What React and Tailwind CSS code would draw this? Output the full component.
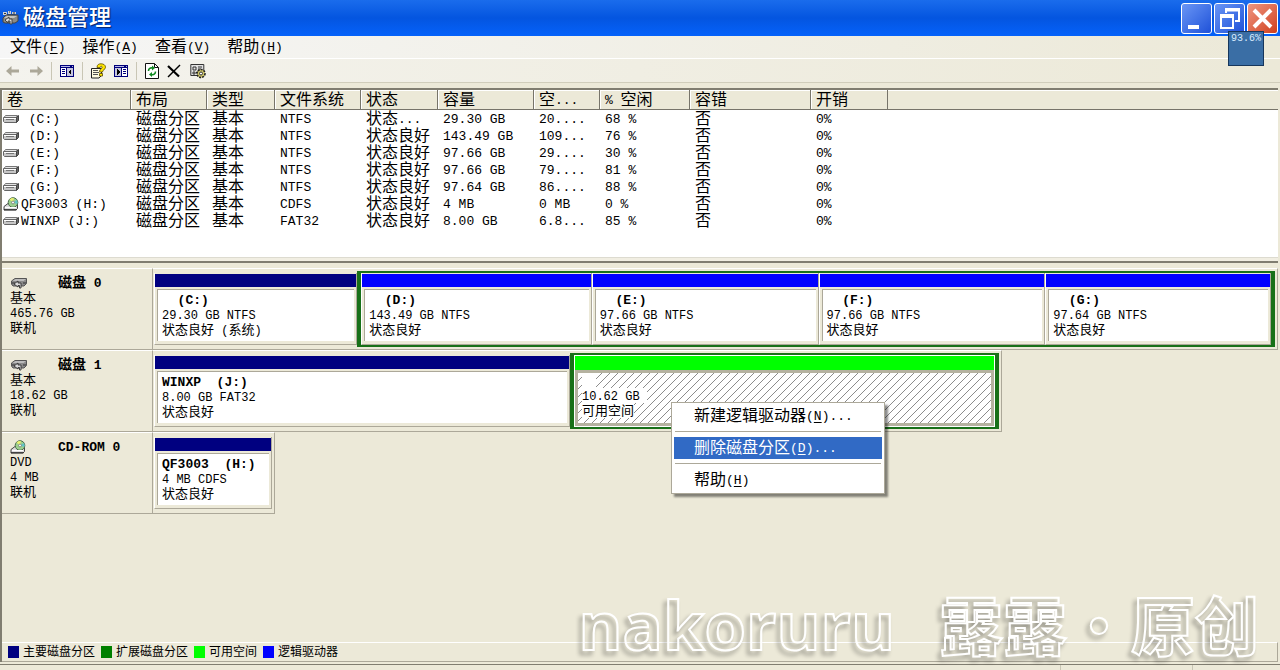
const columns = [
  { title: "卷", width: "w-[129px]" },
  { title: "布局", width: "w-[76px]" },
  { title: "类型", width: "w-[68px]" },
  { title: "文件系统", width: "w-[86px]" },
  { title: "状态", width: "w-[77px]" },
  { title: "容量", width: "w-[96px]" },
  { title: "空...", width: "w-[66px]" },
  { title: "% 空闲", width: "w-[90px]" },
  { title: "容错", width: "w-[121px]" },
  { title: "开销", width: "w-[77px]" },
];

const volumes = [
  { name: " (C:)", fs: "NTFS", status: "状态...", size: "29.30 GB", free: "20....", pct: "68 %" },
  { name: " (D:)", fs: "NTFS", status: "状态良好", size: "143.49 GB", free: "109...", pct: "76 %" },
  { name: " (E:)", fs: "NTFS", status: "状态良好", size: "97.66 GB", free: "29....", pct: "30 %" },
  { name: " (F:)", fs: "NTFS", status: "状态良好", size: "97.66 GB", free: "79....", pct: "81 %" },
  { name: " (G:)", fs: "NTFS", status: "状态良好", size: "97.64 GB", free: "86....", pct: "88 %" },
  { name: "QF3003 (H:)", cd: true, fs: "CDFS", status: "状态良好", size: "4 MB", free: "0 MB", pct: "0 %" },
  { name: "WINXP (J:)", fs: "FAT32", status: "状态良好", size: "8.00 GB", free: "6.8...", pct: "85 %" },
];

const latin = {
  lg: "font-['Liberation_Mono',monospace] align-middle text-[13px] leading-none",
  sm: "font-['Liberation_Mono',monospace] align-middle text-[12px] leading-none",
};

// Chinese keeps the inherited size, latin runs go to the narrow mono face
const T = ({ children, size = "lg" }) => (
  <span className="whitespace-pre">
    {children
      .split(/([\u0020-\u00ff]+)/)
      .filter(Boolean)
      .map((run, i) =>
        run.charCodeAt(0) < 256 ? (
          <span key={i} className={latin[size]}>{run}</span>
        ) : (
          run
        )
      )}
  </span>
);

const Accel = ({ text, letter, dots }) => (
  <span className="whitespace-pre">
    {text}
    <span className={latin.lg}>
      (<u className="underline-offset-2">{letter}</u>){dots}
    </span>
  </span>
);

const DriveIcon = () => (
  <svg className="h-[10px] w-[16px] shrink-0" viewBox="0 0 16 10">
    <path d="M2.5 1.5h12l-1.500 2h-12z" fill="#e4e4e4" stroke="#777" />
    <path d="M.5 3.500h13v5h-12l-1-1z" fill="#c6c6c6" stroke="#666" />
    <path d="M13.500 3.500l2-2v5l-2 2z" fill="#666" stroke="#444" />
    <path d="M3 5.500h8" stroke="#777" />
    <path d="M1 4.500h12" stroke="#fff" />
  </svg>
);

const CdIcon = () => (
  <svg className="h-[14px] w-[16px] shrink-0" viewBox="0 0 16 14">
    <path d="M1 9.500l4-3h9.500v5l-1.500 1.500h-12z" fill="#ddd" stroke="#444" />
    <circle cx="10" cy="5.500" r="4.800" fill="#9ccf8e" stroke="#4c6b4c" />
    <path d="M10 5.500L6.500 2.500A4.500 4.500 0 0 1 11 1.200z" fill="#e8f070" />
    <path d="M10 5.500l4.300 1.500A4.500 4.500 0 0 0 14 3z" fill="#5fc3c8" />
    <circle cx="10" cy="5.500" r="1.400" fill="#fff" stroke="#555" strokeWidth=".6" />
    <path d="M2 10.500h11" stroke="#fff" />
    <path d="M1 12.800h12.500" stroke="#222" />
  </svg>
);

const DiskIcon = () => (
  <svg className="h-[14px] w-[18px]" viewBox="0 0 18 14">
    <path d="M1.500 5L5 2.500h11.500v5L14 10H3L1.500 8z" fill="#8a8a8a" stroke="#555" />
    <path d="M2.500 5h11L16 3H5.500z" fill="#bcbcbc" />
    <path d="M2 7h3m8 0h3" stroke="#333" />
    <path d="M4 8l4-3v2h3v5H9.500V9.500H8V11z" fill="#d9d9d9" stroke="#333" strokeWidth=".9" />
  </svg>
);

const AppIcon = () => (
  <svg className="h-[17px] w-[17px]" viewBox="0 0 17 17">
    <path d="M1 2h4v3H1zM6 1h3v3H6zM10 2h4v2h-4z" fill="#c9cfd8" />
    <path d="M2 3.500h2M7 2h1M11 3h2M5 5h8" stroke="#333" />
    <path d="M1 8l3-3h12v6l-3 2H3l-2-1z" fill="#8b8b86" stroke="#444" />
    <path d="M2 8h10l3-2H5z" fill="#c5c5c0" />
    <path d="M3 10l4-3v2h3v5H8v-3H6v2z" fill="#ddd" stroke="#444" />
  </svg>
);

const PaneIcon = ({ flip }) => (
  <svg className="h-4 w-4" viewBox="0 0 16 16" shapeRendering="crispEdges">
    <rect x="1" y="2" width="14" height="12" fill="#00007b" />
    <rect x="2" y="5" width="12" height="8" fill="#fff" />
    {flip ? (
      <>
        <rect x="2" y="5" width="6" height="8" fill="#c6c6de" />
        <rect x="8" y="5" width="1" height="8" fill="#00007b" />
        <path d="M4 6l3 3-3 3z" fill="#000" />
        <path d="M10 6.500h3M10 8.500h3M10 10.500h3" stroke="#00007b" />
      </>
    ) : (
      <>
        <rect x="8" y="5" width="6" height="8" fill="#c6c6de" />
        <rect x="7" y="5" width="1" height="8" fill="#00007b" />
        <path d="M12 6l-3 3 3 3z" fill="#000" />
        <path d="M3 6.500h3M3 8.500h3M3 10.500h3" stroke="#00007b" />
      </>
    )}
    <path d="M2 3.500h9M13 3.500h1" stroke="#b8b8e8" />
  </svg>
);

const ArrowIcon = ({ flip }) => (
  <svg className="h-4 w-4" viewBox="0 0 16 16">
    <path
      d={flip ? "M15 8L9.500 3v3.500H2v3h7.500V13z" : "M1 8l5.500-5v3.500H14v3H6.500V13z"}
      fill="#aca899"
    />
  </svg>
);

const HelpIcon = () => (
  <svg className="h-4 w-4" viewBox="0 0 16 16">
    <path d="M1.500 5.500h10v7l-2.500 2.500H1.500z" fill="#fffbe0" stroke="#222" />
    <path d="M3 7.500h5M3 9.500h6M3 11.500h5" stroke="#555" />
    <path
      d="M7 4.500C7 1.500 9 .8 11 .8c2.500 0 4.500 1.200 4.500 3.400 0 2.600-3 2.300-3 4.800H9.500c0-3.500 2.700-3.300 2.700-4.800 0-1.200-2.200-1.300-2.200.5zM9.500 10.500h3v2.500h-3z"
      fill="#ffe600"
      stroke="#5a4a00"
      strokeWidth=".8"
    />
  </svg>
);

const RefreshIcon = () => (
  <svg className="h-4 w-4" viewBox="0 0 16 16">
    <path d="M1.500.5h9l4 4v11h-13z" fill="#fff" stroke="#111" />
    <path d="M10.500.5v4h4" fill="none" stroke="#111" />
    <path d="M4.500 8c0-2.500 2-3.500 4-3M11.500 8.500c0 2.500-2 3.700-4 3" fill="none" stroke="#118a22" strokeWidth="1.600" />
    <path d="M8 2.500v5L11 5zM8 9v5l-3-2.500z" fill="#118a22" />
  </svg>
);

const DeleteIcon = () => (
  <svg className="h-4 w-4" viewBox="0 0 16 16">
    <path d="M1 3l11 10.500" stroke="#000" strokeWidth="2.200" />
    <path d="M13 2L1 14" stroke="#000" strokeWidth="1.500" />
  </svg>
);

const PropsIcon = () => (
  <svg className="h-4 w-4" viewBox="0 0 16 16">
    <path d="M.8 1.500h13v11h-13z" fill="#e2e2e2" stroke="#333" />
    <path d="M3 4h3v3H3zM3 9h2v2H3zM8 4h4M8 6h3M6 10l2-2" fill="none" stroke="#333" />
    <circle cx="11" cy="10.500" r="4" fill="#cfc76a" stroke="#222" strokeDasharray="2 1" strokeWidth="1.600" />
    <circle cx="11" cy="10.500" r="1.500" fill="#fff" stroke="#333" />
  </svg>
);

const ToolButton = ({ label, children }) => (
  <button aria-label={label} className="h-4 w-4">
    {children}
  </button>
);

const ToolSep = () => <span className="h-[18px] w-px bg-[#c9c6b5]" />;

const TitleBar = () => (
  <header className="flex h-9 items-center bg-linear-to-b from-[#1a6cec] via-[#0455e0] to-[#0562fa] pl-0.5 pr-0.5">
    <AppIcon />
    <h1 className="ml-1 flex-1 text-[22px] font-medium leading-[30px] text-white [text-shadow:1px_1px_1px_#0a246a]">
      磁盘管理
    </h1>
    <div className="flex gap-0.5">
      <button aria-label="最小化" className="h-[31px] w-[31px] rounded-[3px] border border-white bg-linear-to-br from-[#6a95f5] to-[#1f50d8]">
        <svg viewBox="0 0 29 29">
          <path d="M6 21h11v4H6z" fill="#fff" />
        </svg>
      </button>
      <button aria-label="还原" className="h-[31px] w-[31px] rounded-[3px] border border-white bg-linear-to-br from-[#6a95f5] to-[#1f50d8]">
        <svg viewBox="0 0 29 29" fill="none" stroke="#fff" strokeWidth="2">
          <path d="M11 9V5h13v12h-4" />
          <path d="M10 6h15" strokeWidth="3" />
          <path d="M6 12h12v12H6z" />
          <path d="M5 12h14" strokeWidth="4" />
        </svg>
      </button>
      <button aria-label="关闭" className="h-[31px] w-[31px] rounded-[3px] border border-white bg-linear-to-br from-[#ee9580] to-[#cf3d16]">
        <svg viewBox="0 0 29 29">
          <path d="M6 6l17 17M23 6L6 23" stroke="#fff" strokeWidth="4" />
        </svg>
      </button>
    </div>
  </header>
);

const VolumeTable = () => (
  <div className="h-[167px] bg-white">
    <table className="w-full table-fixed border-collapse">
      <colgroup>
        {columns.map((c) => (
          <col key={c.title} className={c.width} />
        ))}
        <col />
      </colgroup>
      <thead>
        <tr className="bg-[#ece9d8]">
          {columns.map((c) => (
            <th
              key={c.title}
              className="h-5 p-0 pl-[5px] text-left font-normal leading-[20px] shadow-[inset_-1px_0_0_#77746a,inset_0_-1px_0_#77746a,inset_0_1px_0_#fff,inset_1px_0_0_#fff]"
            >
              <T>{c.title}</T>
            </th>
          ))}
          <td className="h-5 p-0 shadow-[inset_0_-1px_0_#77746a,inset_0_1px_0_#fff]" />
        </tr>
      </thead>
      <tbody className="leading-[17px]">
        {volumes.map((v) => (
          <tr key={v.name}>
            <td className="p-0">
              <div className="flex h-[17px] items-center gap-0.5 pl-px">
                {v.cd ? <CdIcon /> : <DriveIcon />}
                <T>{v.name}</T>
              </div>
            </td>
            {["磁盘分区", "基本", v.fs, v.status, v.size, v.free, v.pct, "否", "0%"].map((cell, i) => (
              <td key={i} className="h-[17px] p-0 pl-[5px]">
                <div className="h-[17px]">
                  <T>{cell}</T>
                </div>
              </td>
            ))}
            <td />
          </tr>
        ))}
      </tbody>
    </table>
  </div>
);

const Partition = ({ grow, bar = "bg-[#000080]", name, info, status }) => (
  <div className={`${grow} flex h-[72px] min-w-0 flex-col border-b border-l border-r border-b-[#aca899] border-l-white border-r-[#aca899] pt-px`}>
    <div className={`${bar} h-[13px] shrink-0`} />
    <div className="mx-0.5 mt-0.5 h-[52px] border-l border-t border-[#aca899] bg-white pl-1 pt-0.5 leading-[15px]">
      <div className="text-[14px] font-bold">
        <T>{name}</T>
      </div>
      <div>
        <T size="sm">{info}</T>
      </div>
      <div>
        <T size="sm">{status}</T>
      </div>
    </div>
  </div>
);

const FreeSpace = () => (
  <div className="flex h-[72px] min-w-0 flex-1 flex-col border border-white">
    <div className="h-[14px] shrink-0 bg-[#00ff00]" />
    <div className="flex-1 border-[3px] border-[#b5b2a0] bg-white bg-[linear-gradient(135deg,transparent_45%,#8c8c8c_45%,#8c8c8c_55%,transparent_55%)] bg-[length:8px_8px] pl-1 leading-[15px]">
      <div className="h-[15px] w-3.5 bg-white" />
      <div>
        <span className="inline-block bg-white">
          <T size="sm">10.62 GB </T>
        </span>
      </div>
      <div>
        <span className="inline-block bg-white">可用空间</span>
      </div>
    </div>
  </div>
);

const DiskRow = ({ icon, name, kind, size, width, children }) => (
  <section className="flex h-[82px] text-[13px] leading-[15px]">
    <div className="w-[151px] shrink-0 border-b border-r border-t border-b-[#aca899] border-r-[#aca899] border-t-white pl-2 pt-1.5">
      <div className="flex h-[15px] items-center">
        <div className="w-12">{icon}</div>
        <h2 className="text-[14px] font-bold">
          <T>{name}</T>
        </h2>
      </div>
      <div><T size="sm">{kind}</T></div>
      <div><T size="sm">{size}</T></div>
      <div>联机</div>
    </div>
    <div className={`${width} flex min-w-0 items-center border-b border-r border-t border-b-[#aca899] border-r-[#aca899] border-t-white pl-px pr-0.5`}>
      {children}
    </div>
  </section>
);

const ContextMenu = () => (
  <div
    role="menu"
    className="absolute left-[671px] top-[402px] w-[214px] border border-[#aca899] bg-white p-0.5 leading-[22px] shadow-[3px_3px_2px_rgba(0,0,0,0.45)]"
  >
    <button role="menuitem" className="block h-[22px] w-full pl-5 text-left">
      <Accel text="新建逻辑驱动器" letter="N" dots="..." />
    </button>
    <hr className="mx-px mb-[5px] mt-1 border-[#aca899]" />
    <button role="menuitem" className="block h-[22px] w-full bg-[#316ac5] pl-5 text-left text-white">
      <Accel text="删除磁盘分区" letter="D" dots="..." />
    </button>
    <hr className="mx-px mb-[5px] mt-1 border-[#aca899]" />
    <button role="menuitem" className="block h-[22px] w-full pl-5 text-left">
      <Accel text="帮助" letter="H" />
    </button>
  </div>
);

const legend = [
  ["bg-[#000080]", "主要磁盘分区"],
  ["bg-[#008000]", "扩展磁盘分区"],
  ["bg-[#00ff00]", "可用空间"],
  ["bg-[#0000ff]", "逻辑驱动器"],
];

const App = () => {
  return (
    <div className="relative flex min-h-screen flex-col overflow-hidden bg-[#ece9d8] font-['Liberation_Sans','Noto_Sans_CJK_SC',sans-serif] text-[16px] text-black">
      <TitleBar />
      <nav className="flex h-[22px] items-center gap-[17px] bg-linear-to-r from-[#f6f6f6] to-[#ece9d8] pl-2.5 leading-[22px]">
        <button><Accel text="文件" letter="F" /></button>
        <button><Accel text="操作" letter="A" /></button>
        <button><Accel text="查看" letter="V" /></button>
        <button><Accel text="帮助" letter="H" /></button>
      </nav>
      <div className="flex h-[25px] items-center gap-[7px] border-b border-t border-b-[#d0cdbb] border-t-white bg-linear-to-r from-[#f4f3ee] to-[#ece9d8] pl-[5px]">
        <ToolButton label="后退"><ArrowIcon /></ToolButton>
        <ToolButton label="前进"><ArrowIcon flip /></ToolButton>
        <ToolSep />
        <ToolButton label="显示控制台树"><PaneIcon /></ToolButton>
        <ToolSep />
        <ToolButton label="帮助"><HelpIcon /></ToolButton>
        <ToolButton label="显示操作窗格"><PaneIcon flip /></ToolButton>
        <ToolSep />
        <ToolButton label="刷新"><RefreshIcon /></ToolButton>
        <ToolButton label="删除"><DeleteIcon /></ToolButton>
        <ToolButton label="属性"><PropsIcon /></ToolButton>
      </div>

      <main className="mr-0.5 mt-[5px] flex flex-1 flex-col border-l-2 border-t-2 border-[#807d70]">
        <VolumeTable />
        <div className="h-1.5 border-b-2 border-t border-b-[#807d70] border-t-[#dddbd0] bg-[#f1eee2]" />
        <div className="flex-1 pt-[5px]">
          <DiskRow icon={<DiskIcon />} name="磁盘 0" kind="基本" size="465.76 GB" width="flex-1">
            <Partition grow="flex-[203]" name="  (C:)" info="29.30 GB NTFS" status="状态良好 (系统)" />
            <div className="flex min-w-0 flex-[918] border-x-4 border-y-2 border-[#187018]">
              <Partition grow="flex-[231]" bar="bg-[#0000ff]" name="  (D:)" info="143.49 GB NTFS" status="状态良好" />
              <Partition grow="flex-[227]" bar="bg-[#0000ff]" name="  (E:)" info="97.66 GB NTFS" status="状态良好" />
              <Partition grow="flex-[227]" bar="bg-[#0000ff]" name="  (F:)" info="97.66 GB NTFS" status="状态良好" />
              <Partition grow="flex-[226]" bar="bg-[#0000ff]" name="  (G:)" info="97.64 GB NTFS" status="状态良好" />
            </div>
          </DiskRow>
          <DiskRow icon={<DiskIcon />} name="磁盘 1" kind="基本" size="18.62 GB" width="w-[849px]">
            <Partition grow="flex-[415]" name="WINXP  (J:)" info="8.00 GB FAT32" status="状态良好" />
            <div className="flex min-w-0 flex-[422] border-x-4 border-y-2 border-[#187018]">
              <FreeSpace />
            </div>
          </DiskRow>
          <DiskRow icon={<CdIcon />} name="CD-ROM 0" kind="DVD" size="4 MB" width="w-[122px]">
            <Partition grow="flex-1" name="QF3003  (H:)" info="4 MB CDFS" status="状态良好" />
          </DiskRow>
        </div>
        <footer className="flex h-5 items-center gap-1.5 border-b border-r border-t border-b-[#aca899] border-r-[#aca899] border-t-white pl-1.5 text-[12px] leading-4">
          {legend.map(([color, text]) => (
            <div key={text} className="flex items-center gap-1">
              <span className={`${color} h-3 w-[11px]`} />
              {text}
            </div>
          ))}
        </footer>
      </main>
      <div className="mt-0.5 flex h-1.5 justify-end border-t border-[#807d70]">
        <span className="w-[132px] border-l border-[#c9c6b5]" />
        <span className="w-[88px] border-l border-[#c9c6b5]" />
      </div>

      <ContextMenu />

      <div className="absolute right-4 top-[31px] h-[35px] w-9 border border-[#16365c] bg-[#3a6ea5] text-center font-['Liberation_Mono',monospace] text-[10px] leading-[14px] text-[#d8ecff]">
        93.6%
      </div>

      <div className="pointer-events-none absolute bottom-0 right-[21px] flex items-baseline gap-11 whitespace-nowrap font-bold leading-[92px] text-transparent drop-shadow-[-3px_4px_2px_rgba(0,0,0,0.4)] [-webkit-text-stroke:2px_white]">
        <span className="font-['Open_Sans',sans-serif] text-[67px]">nakoruru</span>
        <span className="font-['Noto_Sans_CJK_SC',sans-serif] text-[64px]">露露・原创</span>
      </div>
    </div>
  );
};

export default App;
